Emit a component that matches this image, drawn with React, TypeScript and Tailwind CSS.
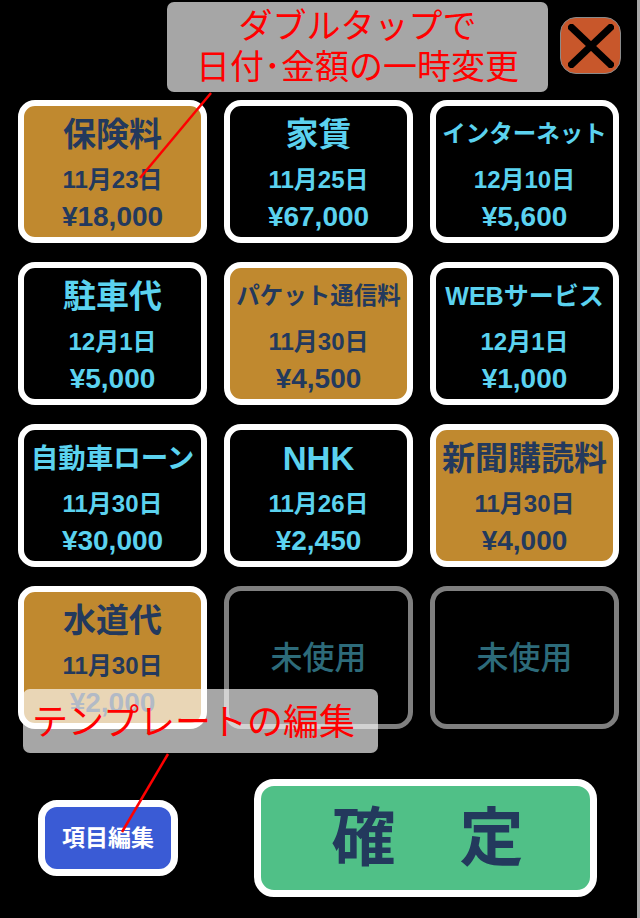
import React from 'react'

type Item = {
  title?: string
  size?: number
  date?: string
  price?: string
  active?: boolean
}

const items: Item[] = [
  { title: '保険料', size: 33, date: '11月23日', price: '¥18,000', active: true },
  { title: '家賃', size: 33, date: '11月25日', price: '¥67,000' },
  { title: 'インターネット', size: 23.5, date: '12月10日', price: '¥5,600' },
  { title: '駐車代', size: 33, date: '12月1日', price: '¥5,000' },
  { title: 'パケット通信料', size: 23.5, date: '11月30日', price: '¥4,500', active: true },
  { title: 'WEBサービス', size: 25, date: '12月1日', price: '¥1,000' },
  { title: '自動車ローン', size: 27.5, date: '11月30日', price: '¥30,000' },
  { title: 'NHK', size: 33, date: '11月26日', price: '¥2,450' },
  { title: '新聞購読料', size: 33, date: '11月30日', price: '¥4,000', active: true },
  { title: '水道代', size: 33, date: '11月30日', price: '¥2,000', active: true },
  {},
  {},
]

const font = "font-['Liberation_Sans','Noto_Sans_CJK_JP',sans-serif]"

function Card({ item }: { item: Item }) {
  if (!item.title) {
    return (
      <div className="h-[143px] rounded-[17px] border-[5px] border-[#7f7f7f] bg-black flex items-center justify-center">
        <span className={`${font} text-[32px] font-medium text-[#2d6b7a]`}>未使用</span>
      </div>
    )
  }
  const text = item.active ? 'text-[#23395d]' : 'text-[#5bd2ef]'
  return (
    <div
      className={`h-[143px] rounded-[17px] border-[6px] border-white flex flex-col items-center justify-center ${
        item.active ? 'bg-[#c0892f]' : 'bg-black'
      } ${font} font-bold ${text}`}
    >
      <div className="h-[50px] flex items-center whitespace-nowrap" style={{ fontSize: item.size }}>
        {item.title}
      </div>
      <div className="h-[40px] flex items-center text-[24px]">{item.date}</div>
      <div className="h-[34px] flex items-center text-[28px]">{item.price}</div>
    </div>
  )
}

export default function App() {
  return (
    <div className="relative w-[640px] h-[918px] bg-black border-r-[3px] border-[#a8a8a8] overflow-hidden flex flex-col">
      {/* header: close button */}
      <div className="h-[100px] flex justify-end items-start pt-[17px] pr-[16px]">
        <button className="w-[61px] h-[57px] rounded-[16px] bg-[#c8572b] border border-[#8a8a8a] flex items-center justify-center">
          <svg width="46" height="44" viewBox="0 0 46 44">
            <line x1="1" y1="1" x2="45" y2="43" stroke="black" strokeWidth="7" />
            <line x1="45" y1="1" x2="1" y2="43" stroke="black" strokeWidth="7" />
          </svg>
        </button>
      </div>

      {/* template grid */}
      <div className="grid grid-cols-[repeat(3,189px)] gap-x-[17px] gap-y-[19px] pl-[18px]">
        {items.map((item, i) => (
          <Card key={i} item={item} />
        ))}
      </div>

      {/* bottom buttons */}
      <div className="mt-[50px] flex items-center pl-[38px] gap-[76px]">
        <button className="w-[140px] h-[76px] rounded-[19px] border-[7px] border-white bg-[#3a5bd5] flex items-center justify-center">
          <span className={`${font} text-[23px] font-bold text-white`}>項目編集</span>
        </button>
        <button className="w-[343px] h-[118px] rounded-[20px] border-[7px] border-white bg-[#50c087] flex items-center justify-center">
          <span className={`${font} text-[64px] font-bold text-[#23395d] pl-[4px]`}>確　定</span>
        </button>
      </div>

      {/* hint balloons */}
      <div className="absolute left-[167px] top-[2px] w-[381px] h-[90px] rounded-[7px] bg-white/65 flex flex-col items-center justify-center">
        <span className={`${font} text-[34px] leading-[41px] text-[#ff0000]`}>ダブルタップで</span>
        <span className={`${font} text-[34px] leading-[41px] text-[#ff0000]`}>日付･金額の一時変更</span>
      </div>
      <div className="absolute left-[23px] top-[689px] w-[355px] h-[64px] rounded-[7px] bg-white/65 flex items-center pl-[9px] pt-[4px]">
        <span className={`${font} text-[36px] leading-[40px] text-[#ff0000] whitespace-nowrap`}>テンプレートの編集</span>
      </div>

      <svg className="absolute inset-0 pointer-events-none" width="640" height="918">
        <line x1="211" y1="93" x2="140" y2="178" stroke="#ff0000" strokeWidth="2.5" />
        <line x1="168" y1="754" x2="122" y2="832" stroke="#ff0000" strokeWidth="2.5" />
      </svg>
    </div>
  )
}
